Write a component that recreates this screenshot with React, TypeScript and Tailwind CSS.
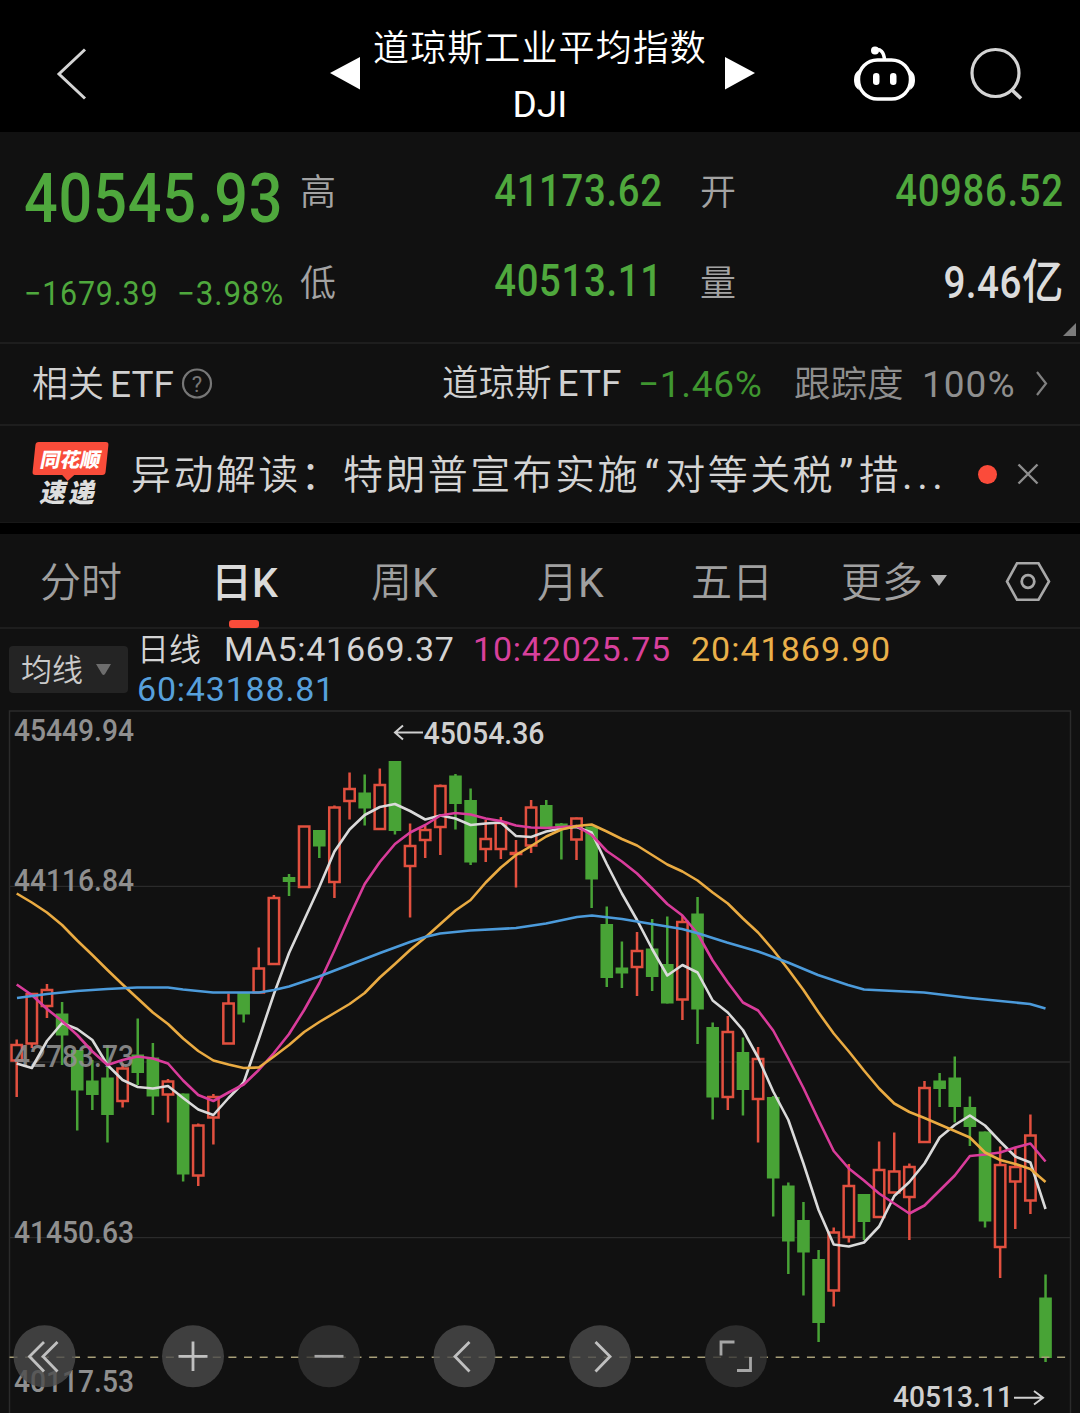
import React from "react";

type Candle = [string, number, number, number, number];
type Point = [number, number];

// tipo (r = alza, g = baja), máximo, tope del cuerpo, base del cuerpo, mínimo
const candles: Candle[] = [
  ["r", 1039.5, 1045, 1060.5, 1097],
  ["r", 993, 994, 1043.5, 1048],
  ["r", 984, 990, 1006, 1018],
  ["g", 1002, 1013.5, 1035.5, 1065],
  ["g", 1050, 1050, 1090.5, 1130.5],
  ["g", 1060, 1080.5, 1095, 1110],
  ["g", 1045, 1077.5, 1115, 1142.5],
  ["r", 1063, 1068.5, 1101, 1107.5],
  ["g", 1018.5, 1054.5, 1073, 1085],
  ["g", 1043, 1057.5, 1096.5, 1115],
  ["r", 1079, 1081.5, 1094.5, 1122.5],
  ["g", 1093.5, 1093.5, 1174.5, 1181.5],
  ["r", 1123.5, 1125.5, 1175.5, 1186],
  ["r", 1094, 1097, 1117.5, 1144.5],
  ["r", 993.5, 1003.5, 1043.5, 1043.5],
  ["g", 993, 993, 1014.5, 1022.5],
  ["r", 947.5, 968.5, 992.5, 992.5],
  ["r", 895, 898, 964, 964],
  ["g", 874, 877, 882, 896],
  ["r", 826.5, 826.5, 887, 887],
  ["g", 830, 830, 846.5, 858],
  ["r", 805.5, 807.5, 882, 898],
  ["r", 772.5, 789, 801, 819.5],
  ["g", 774.5, 792.5, 808.5, 825.5],
  ["r", 768.5, 785, 829, 829],
  ["g", 761, 761, 831, 834.5],
  ["r", 823.5, 846, 866, 917.5],
  ["r", 826, 830, 840, 858],
  ["r", 784.5, 786, 827, 855],
  ["g", 774, 775.5, 804, 829.5],
  ["g", 788.5, 800, 862.5, 865],
  ["r", 820, 839, 849, 862],
  ["r", 817, 823, 849, 859],
  ["r", 840, 853, 854, 887.5],
  ["r", 800, 807.5, 845.5, 853],
  ["g", 800, 805, 828, 828],
  ["g", 823, 823.5, 826, 859.5],
  ["r", 817.5, 818.5, 839.5, 860],
  ["g", 826.5, 826.5, 879.5, 908],
  ["g", 906.5, 924, 978, 987],
  ["g", 941.5, 967.5, 973.5, 988],
  ["r", 932, 951, 967, 996],
  ["g", 919, 948.5, 977, 991],
  ["g", 916.5, 964, 1003.5, 1003.5],
  ["r", 916, 922, 999.5, 1020],
  ["g", 897, 913.5, 1009.5, 1044],
  ["g", 1022.5, 1027, 1097.5, 1119.5],
  ["r", 1016, 1032, 1097, 1110],
  ["g", 1037.5, 1052, 1090, 1115.5],
  ["r", 1047, 1059, 1099, 1142.5],
  ["g", 1096, 1097, 1178.5, 1216.5],
  ["g", 1182.5, 1185.5, 1241.5, 1274],
  ["g", 1202, 1220, 1252.5, 1295.5],
  ["g", 1250, 1259, 1323, 1342],
  ["r", 1227.5, 1232.5, 1290.5, 1306.5],
  ["r", 1164, 1186, 1237, 1242.5],
  ["g", 1194, 1194, 1222, 1240],
  ["r", 1141.5, 1170, 1217, 1217],
  ["r", 1132.5, 1171.5, 1192.5, 1192.5],
  ["r", 1163.5, 1167, 1197, 1240],
  ["r", 1081, 1088, 1142, 1142],
  ["g", 1073, 1080.5, 1089, 1107],
  ["g", 1056.5, 1077.5, 1107, 1122.5],
  ["g", 1096.5, 1107, 1127, 1146],
  ["g", 1131.5, 1131.5, 1221.5, 1227.5],
  ["r", 1146.5, 1165, 1247, 1278],
  ["r", 1148, 1167, 1181.5, 1229],
  ["r", 1114.5, 1135.5, 1200.5, 1214],
  ["g", 1274.5, 1297.5, 1358, 1362],
];

const ma5 = [
  1063.5, 1068, 1041, 1023, 1029, 1040, 1065, 1080, 1087, 1088.5, 1086, 1098,
  1109.5, 1115, 1098, 1082.5, 1039, 994, 953, 920, 887, 851.5, 829.5, 815, 807,
  804, 811, 819.5, 815.5, 818.5, 825, 823.5, 822.5, 836, 837, 831.5, 828.5, 827,
  832.5, 864, 893.5, 920, 949, 975.5, 965, 972.5, 1000.5, 1012.5, 1030, 1057.5,
  1091.5, 1120, 1163.5, 1210, 1244.5, 1246.5, 1242.5, 1226.5, 1196, 1182,
  1163.5, 1137.5, 1125, 1115.5, 1125.5, 1141.5, 1156.5, 1162.5, 1209,
];

const ma10 = [
  984.5, 995, 1009, 1021, 1035, 1051.5, 1065, 1060, 1056.5, 1058.5, 1063.5,
  1080.5, 1095, 1101, 1092.5, 1084.5, 1070, 1053, 1034, 1010, 983, 950.5, 916.5,
  884, 862, 844, 832.5, 825, 815.5, 813, 814.5, 818.5, 821, 825.5, 827.5, 828,
  827, 826, 835, 851, 861.5, 873.5, 888.5, 904, 915.5, 933.5, 960.5, 982.5,
  1002.5, 1010.5, 1030.5, 1058.5, 1088, 1120, 1151, 1168.5, 1180.5, 1193.5,
  1203.5, 1213.5, 1205.5, 1190.5, 1175.5, 1156, 1154.5, 1152.5, 1147.5, 1143.5,
  1161.5,
];

const ma20 = [
  893.5, 902.5, 912.5, 925, 940.5, 955, 970, 984.5, 998.5, 1012.5, 1024, 1038.5,
  1051, 1060.5, 1064.5, 1068, 1067.5, 1056.5, 1045, 1032, 1022, 1013, 1004, 993,
  977.5, 964, 950, 937.5, 924, 910.5, 900, 882.5, 867.5, 855, 846, 836.5, 829.5,
  826, 824.5, 831.5, 839, 845.5, 855, 864.5, 871.5, 880.5, 892.5, 903.5, 918.5,
  932.5, 950, 969.5, 990, 1012.5, 1033.5, 1051.5, 1070.5, 1088.5, 1103.5, 1112,
  1118, 1124.5, 1131, 1137.5, 1152.5, 1160, 1164, 1169, 1182,
];

const ma60: Point[] = [
  [17, 998], [47, 994], [77, 991], [107, 989], [137, 987.5], [168, 987.5],
  [183, 989.5], [213, 992.5], [259, 992.5], [274, 990], [289, 986.5],
  [319, 976.5], [349, 965], [380, 953], [410, 942], [425, 937], [440, 933.5],
  [470, 930.5], [516, 928], [546, 923.5], [577, 917], [592, 915.5], [622, 919],
  [652, 924], [682, 929], [697, 933], [727, 942.5], [758, 951.5], [788, 962.5],
  [818, 975], [848, 985], [864, 989.5], [894, 991], [924, 992.5], [970, 998],
  [1030, 1004], [1045.5, 1008.5],
];

const posX = (i: number) => 16.7 + i * 15.13;
const puntos = (valores: number[]) =>
  valores.map((y, i) => `${posX(i)},${y}`).join(" ");

const Header: React.FC = () => (
  <header className="flex h-[132px] items-start bg-black text-white">
    <svg className="ml-[54px] mt-[46px] h-14 w-9" viewBox="0 0 36 56" fill="none">
      <path d="M31 3.500 L5 28 L31 52.500" stroke="#d4d4d4" strokeWidth="3" />
    </svg>
    <svg className="ml-[240px] mt-[57px] h-9 w-8" viewBox="0 0 32 36">
      <path d="M0 16 L30 0 V32.500 Z" fill="#fff" />
    </svg>
    <div className="flex w-[356px] flex-col items-center pt-[28px]">
      <h1 className="text-[36px] leading-[42px] font-[350] tracking-[1.1px] whitespace-nowrap">
        道琼斯工业平均指数
      </h1>
      <span className="mt-3.5 text-[37px] leading-[42px]">DJI</span>
    </div>
    <svg className="ml-[7px] mt-[57px] h-9 w-8" viewBox="0 0 32 36">
      <path d="M0 0 L30 16 L0 32.500 Z" fill="#fff" />
    </svg>
    <svg className="ml-[96px] mt-[44px] h-[60px] w-[64px]" viewBox="0 0 64 60" fill="none">
      <path d="M22 6 C27 4 31 8 31.500 16" stroke="#fff" strokeWidth="3.500" />
      <circle cx="22" cy="6.500" r="4" fill="#fff" />
      <rect x="5.500" y="16" width="52" height="39" rx="19" stroke="#fff" strokeWidth="3.500" />
      <path d="M4.500 29 C1.500 32 1.500 40 4.500 43 Z M58.500 29 C61.500 32 61.500 40 58.500 43 Z" fill="#fff" stroke="#fff" strokeWidth="2.500" />
      <rect x="20" y="29" width="6.500" height="12" rx="3.200" fill="#fff" />
      <rect x="37" y="29" width="6.500" height="12" rx="3.200" fill="#fff" />
    </svg>
    <svg className="ml-[51px] mt-[44px] h-[58px] w-[58px]" viewBox="0 0 58 58" fill="none">
      <circle cx="27.500" cy="29" r="23.500" stroke="#d4d4d4" strokeWidth="3.200" />
      <path d="M43 45 L53 54.500" stroke="#d4d4d4" strokeWidth="3.600" />
    </svg>
  </header>
);

const Quote: React.FC = () => (
  <section className="relative flex h-[210px] text-[#4fa83d]">
    <div className="w-[300px] pl-6">
      <div className="flex h-[132px] items-center">
        <span className="inline-block origin-left scale-x-[0.86] text-[69px] leading-none font-medium tracking-[1px]">
          40545.93
        </span>
      </div>
      <div className="flex h-[58px] w-[260px] items-center text-[33px] leading-none">
        <span className="w-[153px] shrink-0">
          <span className="inline-block origin-left scale-x-[0.92] tracking-[0.9px]">−1679.39</span>
        </span>
        <span className="inline-block origin-left scale-x-[0.95] tracking-[0.9px]">−3.98%</span>
      </div>
    </div>
    <div className="w-[363px] pt-[23px]">
      <div className="flex h-[72px] items-center justify-between">
        <span className="mt-1 text-[36px] leading-none font-[350] text-[#a3a3a3]">高</span>
        <span className="inline-block origin-right scale-x-[0.87] text-[44px] leading-none font-medium tracking-[0.8px]">41173.62</span>
      </div>
      <div className="mt-[18px] flex h-[72px] items-center justify-between">
        <span className="mt-1.5 text-[36px] leading-none font-[350] text-[#a3a3a3]">低</span>
        <span className="inline-block origin-right scale-x-[0.87] text-[44px] leading-none font-medium tracking-[0.8px]">40513.11</span>
      </div>
    </div>
    <div className="ml-[37px] w-[364px] pt-[23px]">
      <div className="flex h-[72px] items-center justify-between">
        <span className="mt-1 text-[36px] leading-none font-[350] text-[#a3a3a3]">开</span>
        <span className="inline-block origin-right scale-x-[0.87] text-[44px] leading-none font-medium tracking-[0.8px]">40986.52</span>
      </div>
      <div className="mt-[18px] flex h-[72px] items-center justify-between">
        <span className="mt-1.5 text-[36px] leading-none font-[350] text-[#a3a3a3]">量</span>
        <span className="inline-block origin-right scale-x-[0.88] text-[44px] leading-none font-medium tracking-[0.5px] text-[#dcdcdc]">
          9.46<span className="text-[47px]">亿</span>
        </span>
      </div>
    </div>
    <svg className="absolute right-1 bottom-1.5 h-[13px] w-[13px]" viewBox="0 0 13 13">
      <path d="M13 0 V13 H0 Z" fill="#7c7c7c" />
    </svg>
  </section>
);

const EtfRow: React.FC = () => (
  <section className="flex h-[84px] items-center border-y-2 border-[#1e1e1e] pl-8 text-[37px] leading-none text-[#d0d0d0]">
    <span className="w-[142px] text-[36px] font-[350] whitespace-nowrap">相关<span className="ml-1.5 text-[37px] font-normal">ETF</span></span>
    <svg className="ml-[7px] h-8 w-8" viewBox="0 0 32 32" fill="none">
      <circle cx="16" cy="15.500" r="14" stroke="#777" strokeWidth="2.200" />
      <text x="16" y="23.500" textAnchor="middle" fontSize="22" fill="#777">?</text>
    </svg>
    <span className="ml-[229px] w-[182px] text-[36.500px] font-[350] whitespace-nowrap">道琼斯<span className="ml-1.5 text-[37px] font-normal">ETF</span></span>
    <span className="ml-[14px] w-[124px] tracking-[0.7px] text-[#3f9630]">
      −1.46%
    </span>
    <span className="ml-[32px] w-[112px] pt-0.5 text-[36.500px] font-[350] text-[#8f8f8f]">跟踪度</span>
    <span className="ml-4 w-[94px] tracking-[1px] text-[#8f8f8f]">100%</span>
    <svg className="ml-[18px] h-7 w-4" viewBox="0 0 16 28" fill="none">
      <path d="M3 2 L12 13.500 L3 25" stroke="#808080" strokeWidth="2.200" />
    </svg>
  </section>
);

const NewsRow: React.FC = () => (
  <section className="flex h-[97px] items-center border-b border-[#181818] pl-8">
    <div className="flex w-[77px] flex-col items-center">
      <div className="relative flex h-[33px] w-[73px] -skew-x-6 items-center justify-center rounded-[3px] bg-[#f94c3a]">
        <span className="-skew-x-6 pt-0.5 text-[20px] leading-none font-black text-white">同花顺</span>
        <span className="absolute -bottom-1 left-[31px] h-2.5 w-2.5 rotate-45 bg-[#f94c3a]" />
      </div>
      <div className="mt-[5px] flex -skew-x-12 gap-[3px] pr-1 text-[26px] leading-none font-black text-[#dedede]">
        <span>速</span>
        <span>递</span>
      </div>
    </div>
    <p className="ml-[22px] w-[815px] pt-1 text-[40px] leading-none font-[350] tracking-[2.4px] whitespace-nowrap text-[#d4d4d4]">
      异动解读：特朗普宣布实施<span className="mr-[4px] ml-[5px] font-normal">“</span>对等关税<span className="mr-[3px] ml-1 font-normal">”</span>措<span className="ml-px font-normal tracking-[4.5px]">...</span>
    </p>
    <span className="ml-8 h-[19px] w-[19px] rounded-full bg-[#fb4b3a]" />
    <svg className="ml-[19px] h-6 w-6" viewBox="0 0 24 24" fill="none">
      <path d="M2.500 2.500 L21.500 21.500 M21.500 2.500 L2.500 21.500" stroke="#8e8e8e" strokeWidth="2.400" />
    </svg>
  </section>
);

const Tabs: React.FC = () => (
  <nav className="flex h-[95px] items-start border-b-2 border-[#1e1e1e] pt-[28px] text-[41px] leading-[43px] font-[350] whitespace-nowrap text-[#a0a0a0]">
    <span className="ml-10 w-[171px]">分时</span>
    <span className="relative w-[160px] font-medium text-[#dadada]">
      日K
      <span className="absolute top-[58px] left-[18px] h-2 w-[30px] rounded-[3px] bg-[#f94c3a]" />
    </span>
    <span className="w-[166px]">周<span className="font-normal">K</span></span>
    <span className="w-[154px]">月<span className="font-normal">K</span></span>
    <span className="w-[150px]">五日</span>
    <span className="w-[90px]">更多</span>
    <svg className="mt-[13px] h-3 w-4" viewBox="0 0 16 12">
      <path d="M0 0 H16 L8 11 Z" fill="#b0b0b0" />
    </svg>
    <svg className="ml-[57px] h-[42px] w-[48px]" viewBox="0 0 48 42" fill="none">
      <path d="M13 1.300 H34.500 L45 19.500 L34.500 37.700 H13 L3 19.500 Z" stroke="#a8a8a8" strokeWidth="2.600" />
      <circle cx="24" cy="19.500" r="6.300" stroke="#a8a8a8" strokeWidth="2.800" />
    </svg>
  </nav>
);

const Legend: React.FC = () => (
  <section className="flex h-[81px] items-start pl-[9px]">
    <div className="mt-[17px] flex h-[47px] w-[119px] items-center rounded bg-[#242424] pl-3 text-[31px] leading-none font-[350] text-[#cacaca]">
      <span className="pt-0.5">均线</span>
      <svg className="ml-[13px] h-3 w-[15px]" viewBox="0 0 15 12">
        <path d="M0 0 H15 L9 10 Q7.500 12 6 10 Z" fill="#6d6d6d" />
      </svg>
    </div>
    <div className="ml-[9px] pt-px text-[34px] leading-[39px] whitespace-nowrap text-[#d4d4d4]">
      <div className="flex">
        <span className="w-[87px] pt-px text-[32px] font-[350]">日线</span>
        <span className="w-[249px] tracking-[0.7px]">MA5:41669.37</span>
        <span className="w-[218px] tracking-[0.8px] text-[#d8409c]">10:42025.75</span>
        <span className="tracking-[1px] text-[#eab04a]">20:41869.90</span>
      </div>
      <div className="tracking-[0.8px] text-[#57a0dc]">60:43188.81</div>
    </div>
  </section>
);

const Chart: React.FC = () => (
  <svg className="block h-[703px] w-full" viewBox="0 710 1080 703" fill="none">
    <g stroke="#2b2b2b" strokeWidth="1.500">
      <path d="M9.500 1413 V711 H1070.500 V1413" />
      <path d="M9.500 886.300 H1070 M9.500 1062 H1070 M9.500 1237.700 H1070" strokeWidth="1.300" />
    </g>
    {candles.map(([tipo, high, top, bottom, low], i) => {
      const x = posX(i);
      if (tipo === "g") {
        return (
          <g key={i} fill="#48a336">
            <rect x={x - 1.25} y={high} width="2.500" height={low - high} />
            <rect x={x - 6.3} y={top} width="12.600" height={bottom - top} />
          </g>
        );
      }
      return (
        <g key={i} stroke="#e2503f" strokeWidth="2.500">
          <path d={`M${x} ${high} V${top} M${x} ${bottom} V${low}`} />
          <rect x={x - 5.2} y={top} width="10.400" height={bottom - top} />
        </g>
      );
    })}
    <g fontSize="31" fontWeight="500" fill="#8f8f8f">
      <text x="14" y="741" textLength="120" lengthAdjust="spacingAndGlyphs">45449.94</text>
      <text x="14" y="890.500" textLength="120" lengthAdjust="spacingAndGlyphs">44116.84</text>
      <text x="14" y="1067" textLength="120" lengthAdjust="spacingAndGlyphs" opacity="0.9">42783.73</text>
      <text x="14" y="1242.500" textLength="120" lengthAdjust="spacingAndGlyphs">41450.63</text>
      <text x="14" y="1392" textLength="120" lengthAdjust="spacingAndGlyphs">40117.53</text>
    </g>
    <g strokeWidth="2.600" strokeLinejoin="round">
      <polyline points={puntos(ma5)} stroke="#dadada" />
      <polyline points={puntos(ma10)} stroke="#d93c9b" />
      <polyline points={puntos(ma20)} stroke="#eaab42" />
      <polyline points={ma60.map((p) => p.join(",")).join(" ")} stroke="#4c9bdb" />
    </g>
    <path d="M9.500 1357.300 H1070" stroke="#a89f78" strokeWidth="1.600" strokeDasharray="8 7.636" />
    <g fontWeight="500" fill="#d0d0d0" stroke="none">
      <text x="423.500" y="743.500" fontSize="31" textLength="121" lengthAdjust="spacingAndGlyphs">45054.36</text>
      <text x="893" y="1407.300" fontSize="29" textLength="120" lengthAdjust="spacingAndGlyphs">40513.11</text>
    </g>
    <g stroke="#d0d0d0" strokeWidth="2">
      <path d="M423 732.500 H395 M403 725.500 L395 732.500 L403 739.500" />
      <path d="M1014 1397.700 H1043 M1034 1391 L1043 1397.700 L1034 1404.500" />
    </g>
    {/* botones flotantes */}
    <g fill="#4b4b4b" fillOpacity="0.8">
      <circle cx="44.500" cy="1356.300" r="31" />
      <circle cx="193" cy="1356.300" r="31" />
      <circle cx="329" cy="1356.300" r="31" fill="#353535" />
      <circle cx="464.500" cy="1356.300" r="31" />
      <circle cx="600" cy="1356.300" r="31" />
      <circle cx="736" cy="1356.300" r="31" fill="#353535" />
    </g>
    <g stroke="#c0c0c0" strokeWidth="2.800">
      <path d="M44 1342 L29.500 1356.500 L44 1371.500 M57.500 1342 L43 1356.500 L57.500 1371.500" />
      <path d="M178.500 1356.300 H207.500 M193 1341.500 V1371" />
      <path d="M314.500 1356.300 H343.500" stroke="#a6a6a6" />
      <path d="M469.500 1342 L455 1356.500 L469.500 1371.500" />
      <path d="M595.500 1342 L610 1356.500 L595.500 1371.500" />
      <path d="M721 1355.500 V1342 H734.500 M750.500 1357 V1370.500 H737" stroke="#a6a6a6" />
    </g>
  </svg>
);

const App: React.FC = () => {
  return (
    <div className="h-[1413px] w-[1080px] overflow-hidden bg-[#111111] font-[Roboto,'Noto_Sans_CJK_SC',sans-serif]">
      <Header />
      <Quote />
      <EtfRow />
      <NewsRow />
      <div className="h-[11px] bg-black" />
      <Tabs />
      <Legend />
      <Chart />
    </div>
  );
};

export default App;
